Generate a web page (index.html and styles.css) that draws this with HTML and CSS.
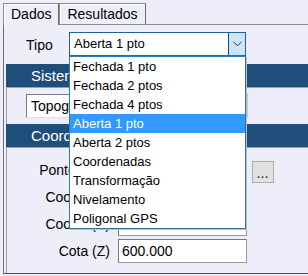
FILE: index.html
```html
<!doctype html>
<html lang="pt">
<head>
    <meta charset="UTF-8" />
    <title>Dados</title>
    <link rel="stylesheet" href="styles.css">
</head>
<body>
    <div class="tabs">
        <div class="tab active">Dados</div>
        <div class="tab">Resultados</div>
    </div>
    <div class="page">
        <div class="tipo">
            <span class="lbl">Tipo</span>
            <div class="combo">
                <span class="val">Aberta 1 pto</span>
                <span class="btn">
                    <svg width="9" height="6" viewBox="0 0 9 6"><path d="M0.5 0.8 L4.5 4.8 L8.5 0.8" fill="none" stroke="#3a3a3a" stroke-width="1"/></svg>
                </span>
                <ul class="list">
                    <li>Fechada 1 pto</li>
                    <li>Fechada 2 ptos</li>
                    <li>Fechada 4 ptos</li>
                    <li class="sel">Aberta 1 pto</li>
                    <li>Aberta 2 ptos</li>
                    <li>Coordenadas</li>
                    <li>Transformação</li>
                    <li>Nivelamento</li>
                    <li>Poligonal GPS</li>
                </ul>
            </div>
        </div>

        <div class="group">
            <div class="head">Sistema de Coordenadas</div>
            <div class="body first">
                <div class="select">Topográfico Local</div>
            </div>
        </div>

        <div class="group">
            <div class="head">Coordenadas</div>
            <div class="body">
                <div class="row">
                    <span class="name">Ponto base</span>
                    <div class="input"></div>
                    <a class="more">...</a>
                </div>
                <div class="row">
                    <span class="name">Coord. (X)</span>
                    <div class="input"></div>
                </div>
                <div class="row">
                    <span class="name">Coord. (Y)</span>
                    <div class="input"></div>
                </div>
                <div class="row">
                    <span class="name">Cota (Z)</span>
                    <div class="input">600.000</div>
                </div>
            </div>
        </div>
    </div>
</body>
</html>
```

FILE: styles.css
```css
* {
    padding: 0px;
    margin: 0px;
    box-sizing: border-box;
}

html,
body {
    width: 100%;
    height: 100%;
    overflow: hidden;
    background: #eeeefa;
    font-family: "Liberation Sans", Arial, sans-serif;
    font-size: 14px;
    color: #000;
}

.tabs {
    display: flex;
    padding: 3px 0 0 3px;
    height: 24px;
}

.tab {
    border: 1px solid #8c8c8c;
    border-bottom: none;
    border-right-color: #6a6a6a;
    padding: 0 7px;
    line-height: 20px;
    background: #eeeefa;
    box-shadow: inset 1px 1px 0 #fff;
}

.tab.active {
    height: 22px;
    position: relative;
    z-index: 2;
}

.page {
    height: 250px;
    margin-left: 3px;
    border-top: 1px solid #8c8c8c;
    border-left: 1px solid #6e6e6e;
    border-bottom: 1px solid #505050;
}

.tipo {
    display: flex;
    align-items: center;
    padding: 7px 0 0 22px;
}

.tipo .lbl {
    width: 43px;
}

.combo {
    position: relative;
    display: flex;
    width: 177px;
    height: 25px;
    background: #fff;
    border: 1px solid #1f5f9e;
    border-bottom: 2px solid #0078d7;
    font-size: 13px;
}

.combo .val {
    flex: 1;
    padding-left: 4px;
    line-height: 22px;
}

.combo .btn {
    width: 17px;
    display: flex;
    align-items: center;
    justify-content: center;
    background: #cce4f7;
    border-left: 1px solid #005499;
}

.list {
    position: absolute;
    top: 23px;
    left: -1px;
    width: 177px;
    list-style: none;
    background: #fff;
    border: 1px solid #2a79b8;
    border-right-color: #3f6f80;
    border-bottom-color: #3f6f80;
    box-shadow: 1px 1px 0 #a9c4cc;
    z-index: 5;
}

.list li {
    height: 19px;
    line-height: 19px;
    padding-left: 3px;
}

.list li.sel {
    background: #3399ff;
    color: #fff;
}

.group {
    margin-left: 2px;
}

.group .head {
    height: 24px;
    line-height: 23px;
    padding-left: 25px;
    background: #204e7a;
    border-bottom: 1px solid #8da3bb;
    color: #fff;
    font-size: 15px;
    white-space: nowrap;
    overflow: hidden;
}

.tipo + .group {
    margin-top: 7px;
}

.group .body {
    border-left: 1px solid #a0a0a0;
    padding: 10px 0 10px 0;
}

.group .body.first {
    padding: 6px 0 6px 19px;
}

.select {
    width: 222px;
    height: 24px;
    line-height: 22px;
    padding-left: 4px;
    background: #fff;
    border: 1px solid #7a7a7a;
    border-right-color: #c8c8c8;
    border-bottom-color: #e0e0e0;
}

.row {
    display: flex;
    align-items: flex-start;
    height: 24px;
    margin-bottom: 3px;
}

.row:last-child {
    margin-bottom: 0;
}

.row .name {
    width: 103px;
    margin-right: 8px;
    text-align: right;
    line-height: 24px;
}

.row .input {
    width: 129px;
    height: 24px;
    line-height: 22px;
    padding-left: 3px;
    background: #fff;
    border: 1px solid #7a7a7a;
    border-right-color: #9a9a9a;
    border-bottom-color: #9a9a9a;
}

.more {
    width: 22px;
    height: 22px;
    margin: 3px 0 0 5px;
    background: #e1e1e1;
    border: 1px solid #adadad;
    text-align: center;
    line-height: 24px;
    font-size: 11px;
    font-weight: bold;
    color: #333;
    letter-spacing: 1px;
}
```
